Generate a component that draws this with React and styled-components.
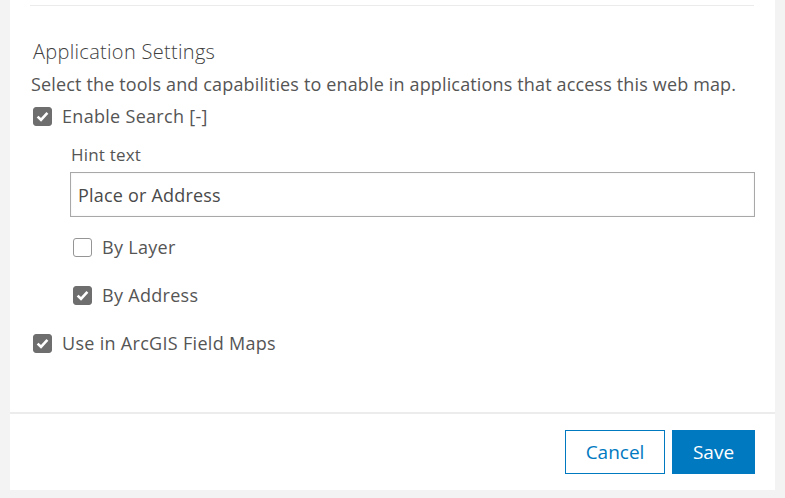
import React from "react";
import styled, { createGlobalStyle } from "styled-components";

const GlobalStyle = createGlobalStyle`
  html, body {
    margin: 0;
    padding: 0;
    background: #f3f3f3;
  }
  body {
    font-family: "Open Sans", "Liberation Sans", sans-serif;
    color: #555;
  }
`;

const Check = ({ checked }) => (
  <Box $checked={checked}>
    {checked && (
      <svg width="13" height="11" viewBox="0 0 13 11">
        <path d="M1.6 5.6 L5 8.8 L11.4 1.8" fill="none" stroke="#fff" strokeWidth="2.6" />
      </svg>
    )}
  </Box>
);

const Option = ({ checked, children }) => (
  <OptionRow>
    <Check checked={checked} />
    <span>{children}</span>
  </OptionRow>
);

const App = () => {
  return (
    <>
      <GlobalStyle />
      <Panel>
        <Body>
          <TopRule />
          <Title>Application Settings</Title>
          <Description>
            Select the tools and capabilities to enable in applications that access this web map.
          </Description>
          <Option checked>Enable Search [-]</Option>
          <SubGroup>
            <FieldLabel>Hint text</FieldLabel>
            <TextInput defaultValue="Place or Address" />
            <SubOptions>
              <Option>By Layer</Option>
              <Option checked>By Address</Option>
            </SubOptions>
          </SubGroup>
          <Option checked>Use in ArcGIS Field Maps</Option>
        </Body>
        <Footer>
          <Button>Cancel</Button>
          <Button $primary>Save</Button>
        </Footer>
      </Panel>
    </>
  );
};

export default App;

const Panel = styled.div`
  margin: 0 10px;
  height: 490px;
  background: #fff;
  display: flex;
  flex-direction: column;
`;

const Body = styled.div`
  flex: 1;
  padding: 0 20px;
`;

const TopRule = styled.div`
  height: 1px;
  margin: 5px 1px 0 0;
  background: #ebebeb;
`;

const Title = styled.h3`
  margin: 33px 0 0 3px;
  font-size: 20px;
  font-weight: 300;
  letter-spacing: 0.3px;
  line-height: 26px;
  color: #3f3f3f;
`;

const Description = styled.p`
  margin: 8px 0 0 1px;
  font-size: 18px;
  letter-spacing: 0.15px;
  line-height: 22px;
`;

const OptionRow = styled.label`
  display: flex;
  align-items: center;
  gap: 10px;
  height: 22px;
  margin-top: 10px;
  font-size: 18px;
  letter-spacing: 0.3px;
`;

const Box = styled.span`
  box-sizing: border-box;
  width: 19px;
  height: 19px;
  margin-left: 3px;
  border-radius: 3px;
  display: flex;
  align-items: center;
  justify-content: center;
  background: ${({ $checked }) => ($checked ? "#6e6e6e" : "#fff")};
  border: 1px solid ${({ $checked }) => ($checked ? "#6e6e6e" : "#959595")};
`;

const SubGroup = styled.div`
  padding-left: 40px;

  ${OptionRow} {
    margin-top: 0;
  }
`;

const FieldLabel = styled.div`
  margin-top: 17px;
  font-size: 17px;
  letter-spacing: 0.2px;
  line-height: 22px;
  padding-left: 1px;
`;

const TextInput = styled.input`
  box-sizing: border-box;
  display: block;
  width: 685px;
  height: 45px;
  margin-top: 6px;
  padding: 0 7px;
  border: 1px solid #a8a8a8;
  box-shadow: inset 0 0 2px rgba(0, 0, 0, 0.08);
  font-family: inherit;
  font-size: 18px;
  letter-spacing: 0.2px;
  color: #4a4a4a;
  outline: none;
`;

const SubOptions = styled.div`
  display: flex;
  flex-direction: column;
  gap: 26px;
  margin-top: 19px;
  margin-bottom: 26px;
`;

const Footer = styled.div`
  display: flex;
  justify-content: flex-end;
  gap: 7px;
  padding: 16px 20px;
  border-top: 2px solid #ececec;
`;

const Button = styled.button`
  box-sizing: border-box;
  height: 44px;
  width: ${({ $primary }) => ($primary ? "83px" : "100px")};
  padding: 0;
  font-family: inherit;
  font-size: 19px;
  cursor: pointer;
  border: 1px solid #0079c1;
  background: ${({ $primary }) => ($primary ? "#0079c1" : "#fff")};
  color: ${({ $primary }) => ($primary ? "#fff" : "#0079c1")};
`;
